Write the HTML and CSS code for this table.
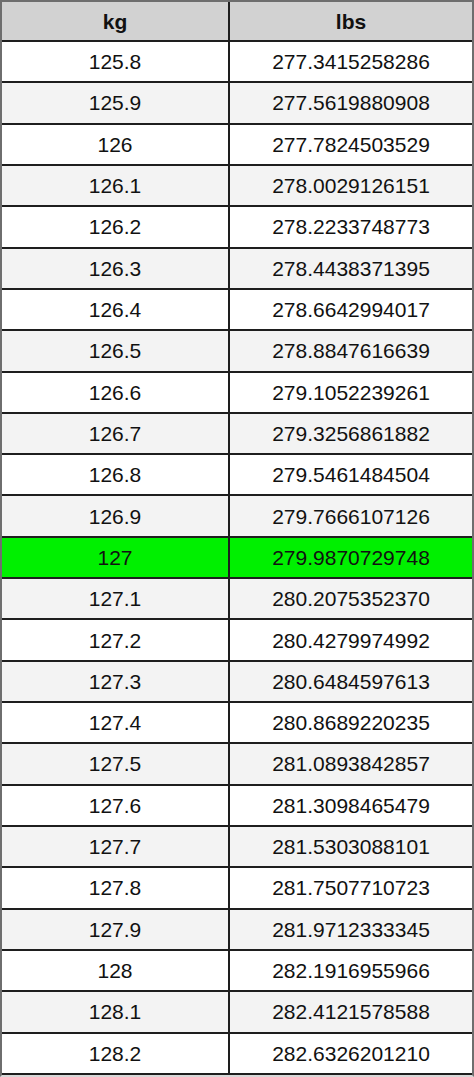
FILE: index.html
```html
<!DOCTYPE html>
<html>
<head>
<meta charset="utf-8">
<link rel="stylesheet" href="styles.css">
</head>
<body>
<div class="conv">
  <div class="cell head">kg</div><div class="cell head">lbs</div>
  <div class="cell">125.8</div><div class="cell">277.3415258286</div>
  <div class="cell alt">125.9</div><div class="cell alt">277.5619880908</div>
  <div class="cell">126</div><div class="cell">277.7824503529</div>
  <div class="cell alt">126.1</div><div class="cell alt">278.0029126151</div>
  <div class="cell">126.2</div><div class="cell">278.2233748773</div>
  <div class="cell alt">126.3</div><div class="cell alt">278.4438371395</div>
  <div class="cell">126.4</div><div class="cell">278.6642994017</div>
  <div class="cell alt">126.5</div><div class="cell alt">278.8847616639</div>
  <div class="cell">126.6</div><div class="cell">279.1052239261</div>
  <div class="cell alt">126.7</div><div class="cell alt">279.3256861882</div>
  <div class="cell">126.8</div><div class="cell">279.5461484504</div>
  <div class="cell alt">126.9</div><div class="cell alt">279.7666107126</div>
  <div class="cell hl">127</div><div class="cell hl">279.9870729748</div>
  <div class="cell alt">127.1</div><div class="cell alt">280.2075352370</div>
  <div class="cell">127.2</div><div class="cell">280.4279974992</div>
  <div class="cell alt">127.3</div><div class="cell alt">280.6484597613</div>
  <div class="cell">127.4</div><div class="cell">280.8689220235</div>
  <div class="cell alt">127.5</div><div class="cell alt">281.0893842857</div>
  <div class="cell">127.6</div><div class="cell">281.3098465479</div>
  <div class="cell alt">127.7</div><div class="cell alt">281.5303088101</div>
  <div class="cell">127.8</div><div class="cell">281.7507710723</div>
  <div class="cell alt">127.9</div><div class="cell alt">281.9712333345</div>
  <div class="cell">128</div><div class="cell">282.1916955966</div>
  <div class="cell alt">128.1</div><div class="cell alt">282.4121578588</div>
  <div class="cell">128.2</div><div class="cell">282.6326201210</div>
</div>
</body>
</html>
```
FILE: styles.css
```css
html, body {
  margin: 0;
  padding: 0;
  background: #ffffff;
}
.conv {
  width: 474px;
  height: 1077px;
  box-sizing: border-box;
  display: grid;
  grid-template-columns: 226px 242px;
  grid-template-rows: 38px repeat(25, 39.32px);
  column-gap: 2px;
  row-gap: 2px;
  background: #1e1e1e;
  border-top: 2px solid #6e6e6e;
  border-left: 2px solid #6e6e6e;
  border-right: 2px solid #6e6e6e;
  padding-bottom: 2px;
  border-bottom: 2px solid #d8d8d8;
  font-family: "Liberation Sans", Arial, sans-serif;
  font-size: 21px;
  color: #111111;
}
.cell {
  background: #ffffff;
  display: flex;
  align-items: center;
  justify-content: center;
  line-height: 1;
}
.cell.alt {
  background: #f3f3f3;
}
.cell.head {
  background: #d2d2d2;
  font-weight: bold;
}
.cell.hl {
  background: #00f000;
}
```
